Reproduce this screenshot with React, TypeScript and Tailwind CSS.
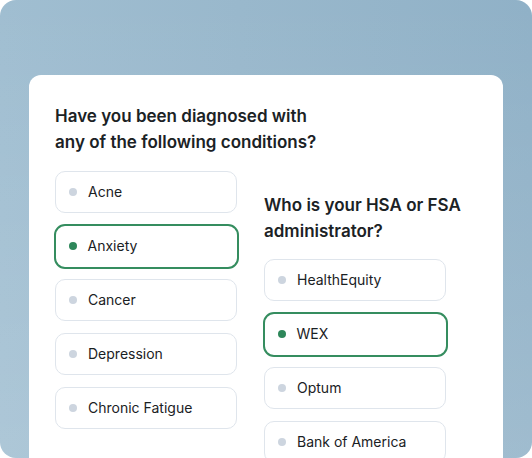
import React from "react";

type Opt = { label: string; selected?: boolean };

const left: Opt[] = [
  { label: "Acne" },
  { label: "Anxiety", selected: true },
  { label: "Cancer" },
  { label: "Depression" },
  { label: "Chronic Fatigue" },
];

const right: Opt[] = [
  { label: "HealthEquity" },
  { label: "WEX", selected: true },
  { label: "Optum" },
  { label: "Bank of America" },
];

function Option({ label, selected }: Opt) {
  if (selected) {
    return (
      <div className="-mx-[1.5px] -my-[1.5px] flex h-[45px] w-[185px] shrink-0 items-center rounded-[11px] border-2 border-[#358d5f] bg-white pl-[13px]">
        <span className="h-[8px] w-[8px] rounded-full bg-[#2e875a]" />
        <span className="-mt-[1px] ml-[11px] text-[14px] leading-none text-[#1a2124]">{label}</span>
      </div>
    );
  }
  return (
    <div className="flex h-[42px] w-[182px] shrink-0 items-center rounded-[10px] border border-[#dfe5ec] bg-white pl-[13px]">
      <span className="h-[8px] w-[8px] rounded-full bg-[#cdd5df]" />
      <span className="-mt-[1px] ml-[11px] text-[14px] leading-none text-[#1a2124]">{label}</span>
    </div>
  );
}

export default function App() {
  return (
    <div
      className="h-[458px] w-[532px] overflow-hidden rounded-[16px] bg-[linear-gradient(180deg,rgba(255,255,255,0)_0%,rgba(255,255,255,0.14)_100%),linear-gradient(90deg,#a0bed1_0%,#99b8cc_45%,#90b1c7_100%)] px-[29px] pt-[75px]"
      style={{ fontFamily: "Inter, 'Noto Sans', sans-serif" }}
    >
      <div className="flex h-full gap-[27px] rounded-t-[12px] bg-white pl-[26px] pt-[28px]">
        <div className="flex w-[182px] flex-col">
          <h2 className="whitespace-nowrap text-[17px] font-semibold leading-[26px] text-[#1b2225]">
            <span className="block">Have you been diagnosed with</span>
            <span className="block">any of the following conditions?</span>
          </h2>
          <div className="mt-[16px] flex flex-col gap-[12px]">
            {left.map((o) => (
              <Option key={o.label} {...o} />
            ))}
          </div>
        </div>
        <div className="mt-[89px] flex w-[182px] flex-col">
          <h2 className="whitespace-nowrap text-[17px] font-semibold leading-[26px] text-[#1b2225]">
            <span className="block">Who is your HSA or FSA</span>
            <span className="block">administrator?</span>
          </h2>
          <div className="mt-[15px] flex flex-col gap-[12px]">
            {right.map((o) => (
              <Option key={o.label} {...o} />
            ))}
          </div>
        </div>
      </div>
    </div>
  );
}
